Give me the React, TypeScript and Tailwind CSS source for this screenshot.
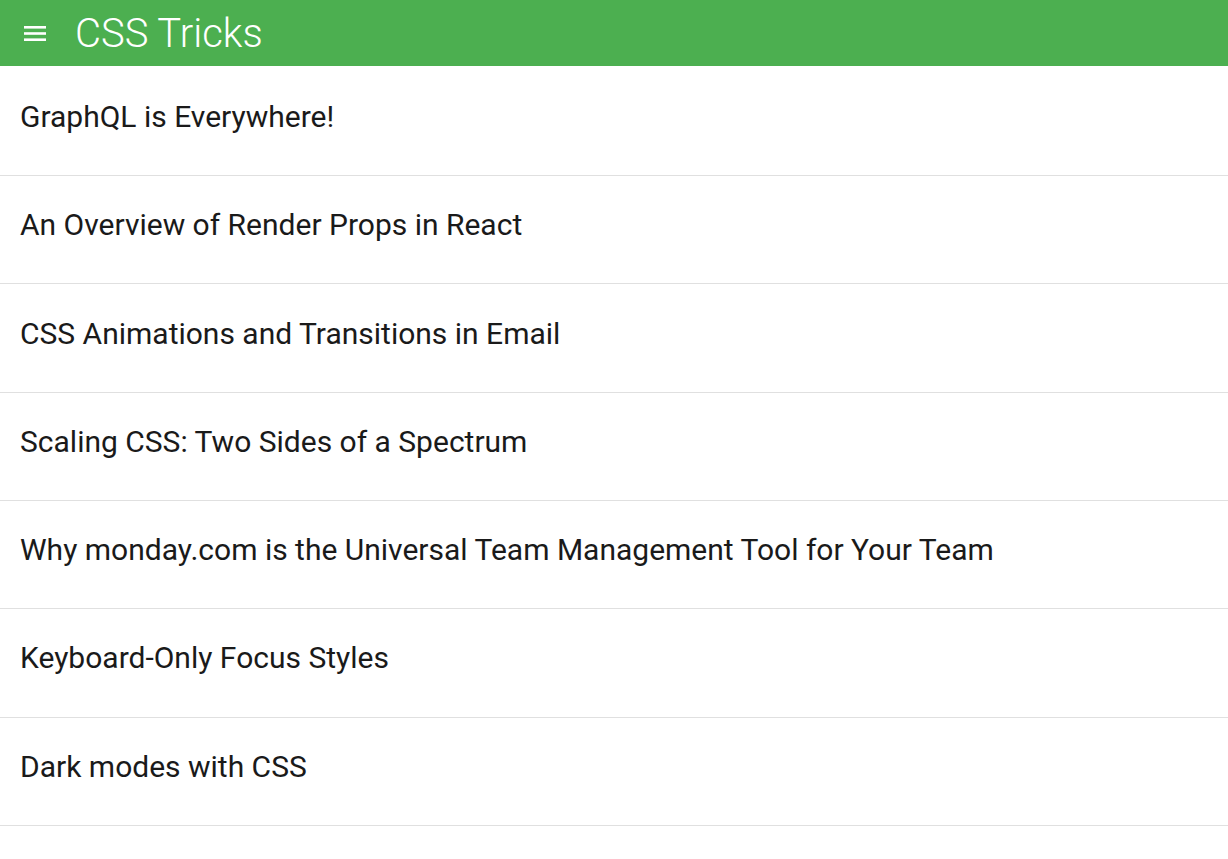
import React from 'react';

const posts = [
  'GraphQL is Everywhere!',
  'An Overview of Render Props in React',
  'CSS Animations and Transitions in Email',
  'Scaling CSS: Two Sides of a Spectrum',
  'Why monday.com is the Universal Team Management Tool for Your Team',
  'Keyboard-Only Focus Styles',
  'Dark modes with CSS',
];

function MenuIcon() {
  return (
    <svg width="22" height="15" viewBox="0 0 22 15" className="text-white" fill="currentColor">
      <rect x="0" y="0" width="22" height="2.6" />
      <rect x="0" y="6.2" width="22" height="2.6" />
      <rect x="0" y="12.4" width="22" height="2.6" />
    </svg>
  );
}

export default function App() {
  return (
    <div className="min-h-screen bg-white font-['Roboto',sans-serif]">
      <header className="h-[66px] bg-[#4caf50] flex items-center pl-6">
        <MenuIcon />
        <h1 className="ml-[29px] text-white text-[40px] font-light leading-none pt-[2px]">CSS Tricks</h1>
      </header>
      <ul className="pt-[1.7px]">
        {posts.map((p) => (
          <li key={p} className="h-[108.33px] border-b border-[#e0e0e0] flex items-center px-[20px] pb-[10px]">
            <span className="text-[30px] text-[#1a1a1a]">{p}</span>
          </li>
        ))}
      </ul>
    </div>
  );
}
